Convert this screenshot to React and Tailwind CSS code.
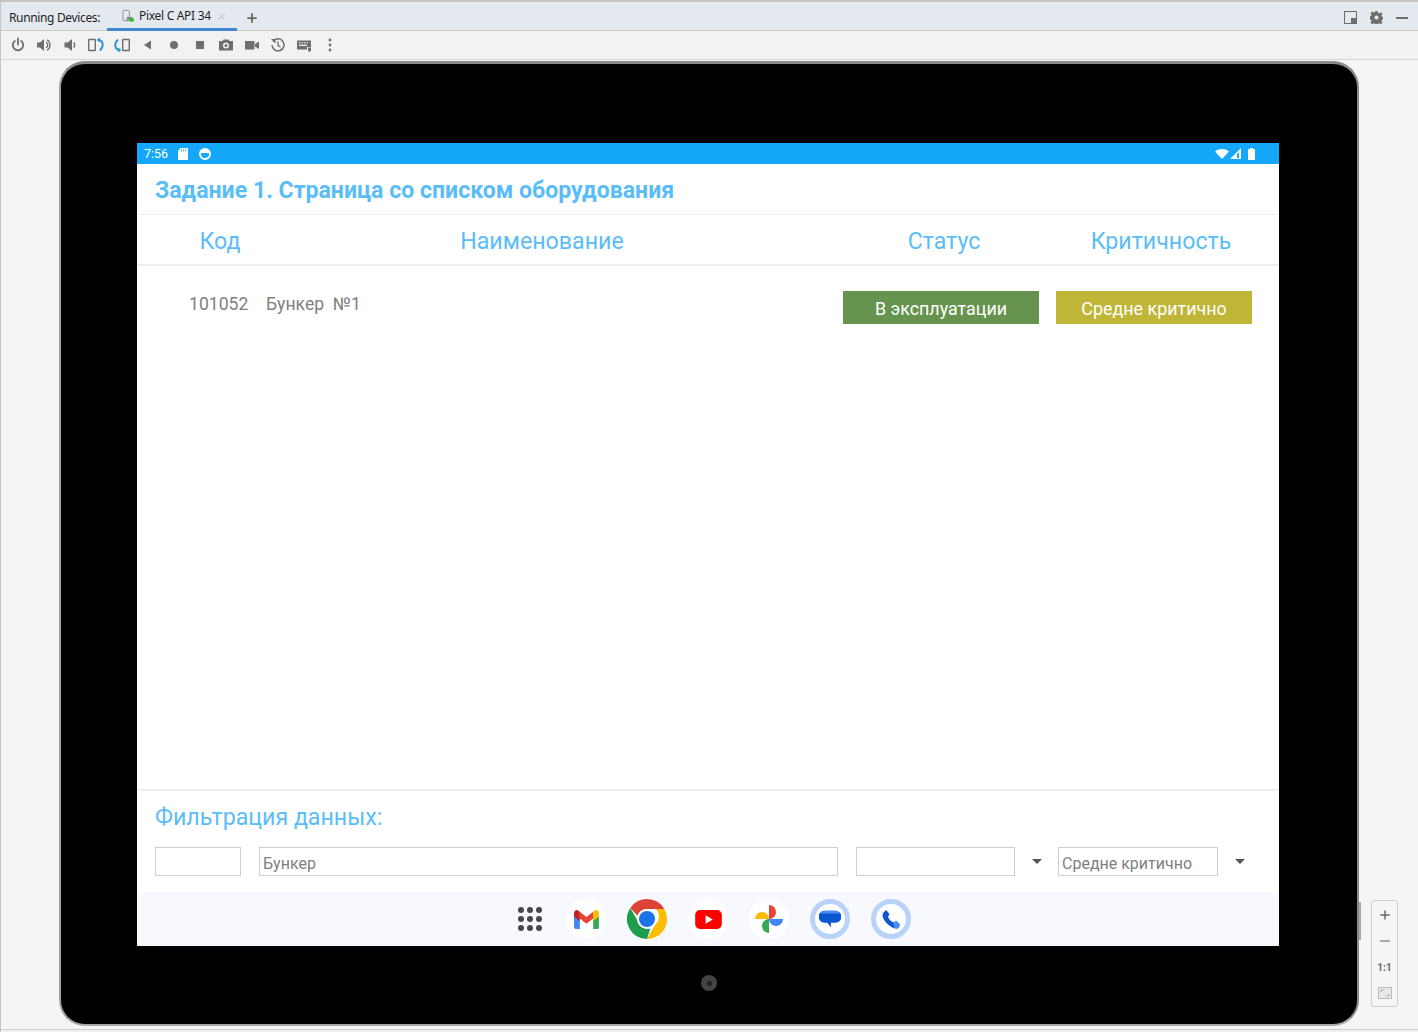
import {Plus, X} from "lucide-react";

const ToolIcon = ({children}) => (
    <svg viewBox="0 0 16 16" className="w-4 h-4 shrink-0" fill="#6e6e6e">{children}</svg>
);

const toolbarIcons = [
    <>
        <path d="M8 1.500v6" stroke="#6e6e6e" strokeWidth="1.800" strokeLinecap="round" fill="none"/>
        <path d="M4.800 4a5.200 5.200 0 1 0 6.400 0" stroke="#6e6e6e" strokeWidth="1.800" strokeLinecap="round" fill="none"/>
    </>,
    <>
        <path d="M1 5.500h3L8 2v12L4 10.500H1z"/>
        <path d="M10 5a3.500 3.500 0 0 1 0 6M11 2.800a6 6 0 0 1 0 10.400" stroke="#6e6e6e" strokeWidth="1.300" fill="none"/>
    </>,
    <>
        <path d="M2.500 5.500h3L10 2v12l-4.500-3.500h-3z"/>
        <path d="M11.500 5.500a3.200 3.200 0 0 1 0 5" stroke="#6e6e6e" strokeWidth="1.400" fill="none"/>
    </>,
    <>
        <rect x="0.700" y="2.500" width="6.600" height="11" rx="0.500" fill="none" stroke="#6e6e6e" strokeWidth="1.400"/>
        <path d="M11 3c2.400.4 3.700 2.500 3.700 5 0 2-.9 3.800-2.800 5.500" stroke="#2f93d8" strokeWidth="2" fill="none"/>
        <path d="M8.500 3l3.500-2.500v5z" fill="#2f93d8"/>
    </>,
    <>
        <rect x="8.700" y="2.500" width="6.600" height="11" rx="0.500" fill="none" stroke="#6e6e6e" strokeWidth="1.400"/>
        <path d="M4.100 2.500C2.200 4.200 1.300 6 1.300 8c0 2.500 1.300 4.600 3.700 5" stroke="#2f93d8" strokeWidth="2" fill="none"/>
        <path d="M7.500 13L4 10.500v5z" fill="#2f93d8"/>
    </>,
    <path d="M4 8l7-4.500v9z"/>,
    <circle cx="8" cy="8" r="4"/>,
    <rect x="4" y="4" width="8" height="8"/>,
    <path fillRule="evenodd" d="M1 4h3.500l1-1.500h5L11.500 4H15v9.500H1zM8 5.500a3 3 0 1 0 0 6 3 3 0 0 0 0-6zm0 1.500a1.500 1.500 0 1 1 0 3 1.500 1.500 0 0 1 0-3z"/>,
    <path d="M1 4h9.500v8.500H1zM11 7l4-2.500v7.500l-4-2.500z"/>,
    <>
        <path d="M3 4.500A6 6 0 1 1 2 8" stroke="#6e6e6e" strokeWidth="1.500" fill="none"/>
        <path d="M1 2h4.500v4.500z"/>
        <path d="M8 4.500V8.500l2.500 1.500" stroke="#6e6e6e" strokeWidth="1.400" fill="none"/>
    </>,
    <>
        <path fillRule="evenodd" d="M1 3.500h14v6.500H11v2.500H1zM3 5.200v1.300h1.300V5.200zm2.500 0v1.300h1.300V5.200zm2.500 0v1.300h1.300V5.200zm2.500 0v1.300h1.300V5.200zM3 7.800v1.200h8V7.800z"/>
        <path d="M12 10.500h3v3l-1.500 1.500-1.500-1.500z"/>
    </>,
    <>
        <circle cx="8" cy="3" r="1.400"/>
        <circle cx="8" cy="8" r="1.400"/>
        <circle cx="8" cy="13" r="1.400"/>
    </>,
];

const DockCircle = ({children, ring}) => (
    <div className={`w-10 h-10 rounded-full flex items-center justify-center shrink-0 ${ring ? "bg-white border-[5px] border-[#b9d2f8]" : "bg-white"}`}>
        {children}
    </div>
);

const Gmail = () => (
    <svg viewBox="0 0 28 22" className="w-[27px] h-[21px]">
        <path d="M1 4v15.500a1.500 1.500 0 0 0 1.500 1.500H7V9z" fill="#4285f4"/>
        <path d="M27 4v15.500a1.500 1.500 0 0 1-1.500 1.500H21V9z" fill="#34a853"/>
        <path d="M7 3v7l7 5.500 7-5.500V3l-7 5.500z" fill="#ea4335"/>
        <path d="M1 4.500V8l6 4.500V3L5 1.500C3.200.3 1 1.800 1 4.500z" fill="#c5221f"/>
        <path d="M27 4.500V8l-6 4.500V3l2-1.500c1.800-1.200 4 .3 4 3z" fill="#fbbc04"/>
    </svg>
);

const Chrome = () => (
    <svg viewBox="0 0 40 40" className="w-10 h-10 shrink-0">
        <path d="M20 0a20 20 0 0 1 17.320 10H20a10 10 0 0 0-9.500 6.800L3.300 9A20 20 0 0 1 20 0z" fill="#db4437"/>
        <path d="M37.320 10A20 20 0 0 1 20 40l8.600-15a10 10 0 0 0 0-15z" fill="#fbbc04"/>
        <path d="M20 40A20 20 0 0 1 3.300 9l8 14a10 10 0 0 0 12 6.500z" fill="#1e9e4a"/>
        <circle cx="20" cy="20" r="10" fill="#fff"/>
        <circle cx="20" cy="20" r="8" fill="#1a73e8"/>
    </svg>
);

const Youtube = () => (
    <svg viewBox="0 0 28 20" className="w-[27px] h-[19px]">
        <rect width="28" height="20" rx="5" fill="#f00"/>
        <path d="M11 5.500l7.500 4.500-7.500 4.500z" fill="#fff"/>
    </svg>
);

const Photos = () => (
    <svg viewBox="0 0 30 30" className="w-[30px] h-[30px]">
        <path d="M15 15V1a7 7 0 0 1 0 14z" fill="#ea4335"/>
        <path d="M15 15h14a7 7 0 0 1-14 0z" fill="#4285f4"/>
        <path d="M15 15v14a7 7 0 0 1 0-14z" fill="#34a853"/>
        <path d="M15 15H1a7 7 0 0 1 14 0z" fill="#fbbc04"/>
    </svg>
);

const Messages = () => (
    <svg viewBox="0 0 24 24" className="w-[22px] h-[22px]">
        <path d="M6 3h12a5 5 0 0 1 0 13h-5v5l-4-5H6A5 5 0 0 1 6 3z" fill="#0b57d0"/>
        <path d="M6 3h12a5 5 0 0 1 4.600 3H1.400A5 5 0 0 1 6 3z" fill="#4c8df6"/>
    </svg>
);

const Phone = () => (
    <svg viewBox="0 0 24 24" className="w-[24px] h-[24px]">
        <path d="M7 3l3.500 4-1.500 3c1 2.500 3 4.500 5.500 5.500l3-1.500 3.500 3.500-1.500 3.500c-3 1.500-7.500-.5-11-4S2.500 9.500 4 6z" fill="#0b57d0"/>
        <path d="M14.500 15.500l3-1.500 3.500 3.500-1.500 3.500c-1.500.5-3 .3-4.500-.3z" fill="#4c8df6"/>
    </svg>
);

const Caret = () => (
    <div className="w-0 h-0 border-x-[5px] border-x-transparent border-t-[5px] border-t-[#555] shrink-0"/>
);

const inputClass = "h-[29px] border border-[#cfcfcf] bg-white px-[3px] pt-[3px] text-[16px] text-[#808080] outline-none";

export default function App() {
    return (
        <div className="w-[1418px] h-[1032px] relative overflow-hidden bg-[#f5f5f5] border-l border-[#c4c4c4] flex flex-col" style={{fontFamily: "Roboto, sans-serif"}}>
            {/* Tab bar */}
            <div className="h-[31px] shrink-0 bg-[#e4e8ef] border-t-2 border-b border-t-[#c4c4c4] border-b-[#c9c9c9] flex items-center text-[12px] text-[#1f1f1f]" style={{fontFamily: "'Noto Sans', sans-serif"}}>
                <span className="ml-[8px] w-[98px] shrink-0 tracking-[-0.35px] pt-[3px]">Running Devices:</span>
                <div className="w-[130px] h-full border-b-[3px] border-[#3f86d4] flex items-center pl-[15px] gap-1 -mb-px pt-[2px]">
                    <svg viewBox="0 0 14 14" className="w-[13px] h-[14px] shrink-0">
                        <rect x="1" y="1" width="7" height="11" rx="1" fill="none" stroke="#8a8a8a"/>
                        <rect x="5" y="8" width="6" height="4" fill="#8a8aa0"/>
                        <circle cx="10.500" cy="11" r="2.500" fill="#35c235"/>
                    </svg>
                    <span className="tracking-[-0.3px] whitespace-nowrap">Pixel C API 34</span>
                    <X className="w-[11px] h-[11px] text-[#b5b5b5] ml-[1px] shrink-0"/>
                </div>
                <Plus className="w-[14px] h-[14px] text-[#666] ml-2 mt-[3px] shrink-0" strokeWidth={3}/>
                <div className="ml-auto flex items-center gap-[13px] pr-[10px] pt-[3px]">
                    <svg viewBox="0 0 13 13" className="w-[13px] h-[13px]">
                        <rect x="0.500" y="0.500" width="12" height="12" fill="none" stroke="#6e6e6e"/>
                        <rect x="7" y="7" width="6" height="6" fill="#6e6e6e"/>
                    </svg>
                    <svg viewBox="0 0 14 14" className="w-[13px] h-[13px]" fill="#6e6e6e">
                        <path fillRule="evenodd" d="M5.700 0h2.600l.3 2 1.300.6 1.700-1.200 1.900 1.900-1.200 1.700.6 1.300 2 .3v2.600l-2 .3-.6 1.300 1.200 1.700-1.900 1.900-1.700-1.200-1.300.6-.3 2H5.700l-.3-2-1.300-.6-1.700 1.200-1.900-1.900 1.200-1.700-.6-1.300-2-.3V5.700l2-.3.6-1.300-1.200-1.700 1.900-1.900 1.700 1.200 1.300-.6zM7 4.800a2.200 2.200 0 1 0 0 4.400 2.200 2.200 0 0 0 0-4.400z"/>
                    </svg>
                    <div className="w-3 h-[2px] bg-[#6e6e6e]"/>
                </div>
            </div>

            {/* Device toolbar */}
            <div className="h-[29px] shrink-0 bg-[#f2f2f2] border-b border-[#d4d4d4] flex items-center gap-[10px] pl-[9px]">
                {toolbarIcons.map((icon, index) => (
                    <ToolIcon key={index}>{icon}</ToolIcon>
                ))}
            </div>

            {/* Emulator area */}
            <div className="flex-1 pl-[58px] pt-[1px]">
                <div className="w-[1300px] h-[965px] bg-black rounded-[26px] border-2 border-t-[3px] border-[#8a8a8a] border-b-[#a8a8a8] border-l-[#a0a0a0] pl-[76px] pt-[79px]">
                    <div className="w-[1142px] h-[803px] bg-white flex flex-col">
                        {/* Status bar */}
                        <div className="h-[21px] shrink-0 bg-[#15a7f9] flex items-center pl-[7px] pr-[24px] text-white text-[12.5px]">
                            <span className="mr-[10px] pt-[2px]">7:56</span>
                            <svg viewBox="0 0 10 12" className="w-[10px] h-[12px] mr-[11px]" fill="#fff">
                                <path d="M2.500 0H9.500a.5.5 0 0 1 .5.500V11a1 1 0 0 1-1 1H1a1 1 0 0 1-1-1V3z"/>
                                <path d="M3.500 1v2.500M5.500 1v2.500M7.500 1v2.500" stroke="#15a7f9" strokeWidth="0.700"/>
                            </svg>
                            <div className="w-3 h-3 rounded-full border-2 border-white bg-[#15a7f9] relative">
                                <div className="absolute inset-x-0 top-0 h-[3px] bg-white"/>
                            </div>
                            <svg viewBox="0 0 14 10" className="w-[14px] h-[10px] ml-auto" fill="#fff">
                                <path d="M0 2.500C3.500-.8 10.500-.8 14 2.500L7 10z"/>
                            </svg>
                            <svg viewBox="0 0 11 11" className="w-[11px] h-[11px] ml-[1px] mr-[7px]">
                                <path d="M11 0v11H0z" fill="#fff"/>
                                <path d="M9 4v6H7V6z" fill="#15a7f9"/>
                            </svg>
                            <svg viewBox="0 0 7 12" className="w-[7px] h-[12px]" fill="#fff">
                                <path d="M2 0h3v1h1.500a.5.5 0 0 1 .5.500V11.500a.5.5 0 0 1-.5.500H.5a.5.5 0 0 1-.5-.500V1.500A.5.5 0 0 1 .5 1H2z"/>
                            </svg>
                        </div>

                        {/* Title */}
                        <div className="h-[51px] shrink-0 border-b border-[#eeeeee] flex items-center pl-[18px] pt-[4px] text-[23.1px] font-bold text-[#5bbdf8]">
                            Задание 1. Страница со списком оборудования
                        </div>

                        {/* Table header */}
                        <div className="h-[51px] shrink-0 border-b-2 border-[#eeeeee] flex items-center pt-[3px] text-[23.2px] text-[#5bbdf8] text-center">
                            <div className="w-[166px]">Код</div>
                            <div className="w-[478px]">Наименование</div>
                            <div className="w-[202px] ml-[62px]">Статус</div>
                            <div className="w-[232px]">Критичность</div>
                        </div>

                        {/* Row */}
                        <div className="flex-1 flex items-start pl-[52px] pr-[27px] pt-[25px] text-[17.6px] text-[#808080]">
                            <span className="w-[77px]">101052</span>
                            <span className="whitespace-pre">Бункер  №1</span>
                            <div className="ml-auto flex gap-[17px] text-white text-[17.9px]">
                                <div className="w-[196px] h-[33px] bg-[#66944e] flex items-center justify-center pt-[4px]">В эксплуатации</div>
                                <div className="w-[196px] h-[33px] bg-[#bfb536] flex items-center justify-center pt-[4px]">Средне критично</div>
                            </div>
                        </div>

                        {/* Filters */}
                        <div className="h-[103px] shrink-0 border-t-2 border-[#eeeeee] px-[18px] pt-[11px]">
                            <div className="text-[23.2px] leading-[30px] text-[#5bbdf8]">Фильтрация данных:</div>
                            <div className="flex items-center mt-[15px]">
                                <input readOnly value="" className={`${inputClass} w-[86px]`}/>
                                <input readOnly value="Бункер" className={`${inputClass} w-[579px] ml-[18px]`}/>
                                <input readOnly value="" className={`${inputClass} w-[159px] ml-[18px]`}/>
                                <div className="ml-[17px]"><Caret/></div>
                                <input readOnly value="Средне критично" className={`${inputClass} w-[160px] ml-[16px]`}/>
                                <div className="ml-[17px]"><Caret/></div>
                            </div>
                        </div>

                        {/* Launcher dock */}
                        <div className="h-[54px] shrink-0 bg-[#f8f9fe] flex items-center pl-[381px]">
                            <div className="grid grid-cols-3 gap-[3px] w-[24px] shrink-0">
                                {Array.from({length: 9}).map((_, index) => (
                                    <div key={index} className="w-[6px] h-[6px] rounded-full bg-[#44474f]"/>
                                ))}
                            </div>
                            <div className="flex items-center gap-[21px] ml-[24px]">
                                <DockCircle><Gmail/></DockCircle>
                                <Chrome/>
                                <DockCircle><Youtube/></DockCircle>
                                <DockCircle><Photos/></DockCircle>
                                <DockCircle ring><Messages/></DockCircle>
                                <DockCircle ring><Phone/></DockCircle>
                            </div>
                        </div>
                    </div>
                </div>
            </div>
            <div className="h-[3px] shrink-0 bg-[#f0f0f0] border-t border-[#cfcfcf]"/>

            {/* Camera dot */}
            <div className="absolute left-[700px] top-[975px] w-4 h-4 rounded-full bg-[#444] flex items-center justify-center">
                <div className="w-[5px] h-[5px] rounded-full bg-[#222]"/>
            </div>

            {/* Side button on the frame */}
            <div className="absolute left-[1358px] top-[902px] w-[2px] h-[38px] bg-[#a8a8a8]"/>

            {/* Zoom controls */}
            <div className="absolute left-[1370px] top-[900px] w-[27px] h-[107px] rounded-[3px] border border-[#cfcfcf] bg-[#f5f5f5] flex flex-col items-center text-[#666]">
                <div className="h-[26px] w-full flex items-center justify-center mt-[1px]">
                    <Plus className="w-[14px] h-[14px]" strokeWidth={2.5}/>
                </div>
                <div className="h-[26px] w-full flex items-center justify-center">
                    <div className="w-[10px] h-[2px] bg-[#aaa]"/>
                </div>
                <div className="h-[26px] w-full flex items-center justify-center text-[10px] font-bold">1:1</div>
                <div className="h-[26px] w-full flex items-center justify-center">
                    <svg viewBox="0 0 14 12" className="w-[14px] h-[12px]">
                        <rect x="0.500" y="0.500" width="13" height="11" fill="#e8e8e8" stroke="#bbb"/>
                        <path d="M3 5V3h2.500M11 7v2H8.500" fill="none" stroke="#aaa"/>
                    </svg>
                </div>
            </div>
        </div>
    );
}
